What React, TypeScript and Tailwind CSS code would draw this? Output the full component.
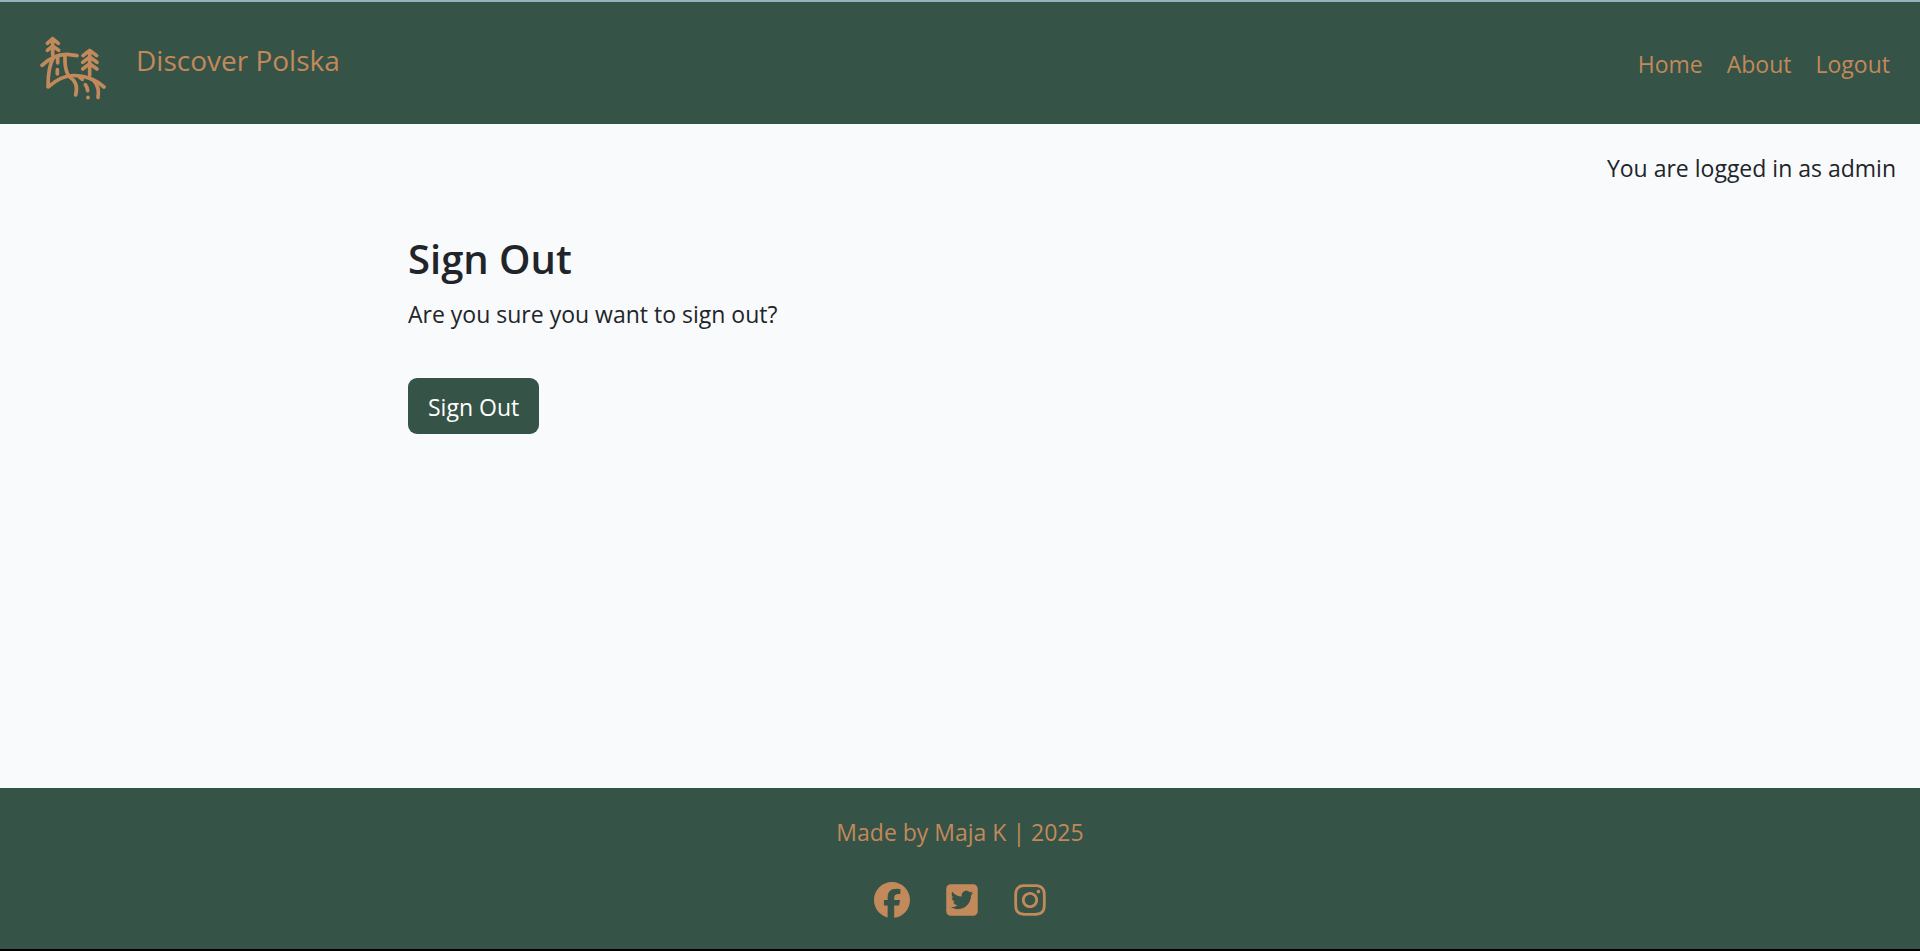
import { FaFacebook, FaInstagram, FaSquareTwitter } from "react-icons/fa6";

const navItems = ["Home", "About", "Logout"];

const socials = [
  { label: "Facebook", href: "#facebook", Icon: FaFacebook, width: "w-9" },
  { label: "Twitter", href: "#twitter", Icon: FaSquareTwitter, width: "w-8" },
  { label: "Instagram", href: "#instagram", Icon: FaInstagram, width: "w-8" },
];

function Logo() {
  return (
    <svg
      viewBox="60 48 198 192"
      className="h-16 w-[66px]"
      fill="none"
      stroke="currentColor"
      strokeWidth="11"
      strokeLinecap="round"
      strokeLinejoin="round"
      aria-hidden="true"
    >
      {/* left tree */}
      <path d="M98 56V106M82 70L98 56L115 70M82 91L98 78L116 91" />
      {/* right tree */}
      <path d="M209 92V166M189 107L209 91L230 107M188 127L209 111L231 127M188 147L209 131L231 147" />
      {/* upper ridge */}
      <path d="M66 136C90 113 112 102 142 103L171 107" />
      {/* cliff and lower hill */}
      <path d="M101 112C88 133 84 158 84 201C112 177 142 164 168 167C202 168 228 180 252 201" />
      {/* waterfall */}
      <path d="M135 107C134 130 136 150 144 164M113 111V129M112 149V162" />
      {/* river */}
      <path d="M149 171C168 182 173 201 167 225M179 172L187 178M196 194C200 199 202 205 203 212M204 232V233M222 183C234 196 237 215 234 232" />
    </svg>
  );
}

export default function App() {
  return (
    <div className="flex min-h-screen flex-col border-t-2 border-b-2 border-t-[#94b5bd] border-b-black bg-[#f9fafc] font-['Open_Sans','Noto_Sans',sans-serif] text-[23px] leading-9 text-[#212529]">
      <header className="flex items-center justify-between bg-[#365347] pt-[34px] pr-[30px] pb-6 pl-10 text-[#c2895a]">
        <a href="#home" className="flex items-start gap-[30px] text-[28px]">
          <Logo />
          <span className="pt-1.5">Discover Polska</span>
        </a>
        <nav className="flex gap-6 pb-2">
          {navItems.map((item) => (
            <a key={item} href={`#${item.toLowerCase()}`}>
              {item}
            </a>
          ))}
        </nav>
      </header>

      <p className="pt-[26px] pr-6 text-right">You are logged in as admin</p>

      <main className="mx-auto w-full max-w-[1104px] grow pt-12">
        <h1 className="text-[40px] leading-[50px] font-semibold">Sign Out</h1>
        <p className="pt-3">Are you sure you want to sign out?</p>
        <form className="pt-[46px]" onSubmit={(event) => event.preventDefault()}>
          <button
            type="submit"
            className="rounded-[9px] bg-[#365347] px-5 pt-[11px] pb-[9px] text-white"
          >
            Sign Out
          </button>
        </form>
      </main>

      <footer className="flex flex-col items-center gap-8 bg-[#365347] pt-[26px] pb-[31px] text-[#c2895a]">
        <p>Made by Maja K | 2025</p>
        <div className="flex gap-9">
          {socials.map(({ label, href, Icon, width }) => (
            <a key={label} href={href} aria-label={label}>
              <Icon className={`h-9 ${width}`} />
            </a>
          ))}
        </div>
      </footer>
    </div>
  );
}
